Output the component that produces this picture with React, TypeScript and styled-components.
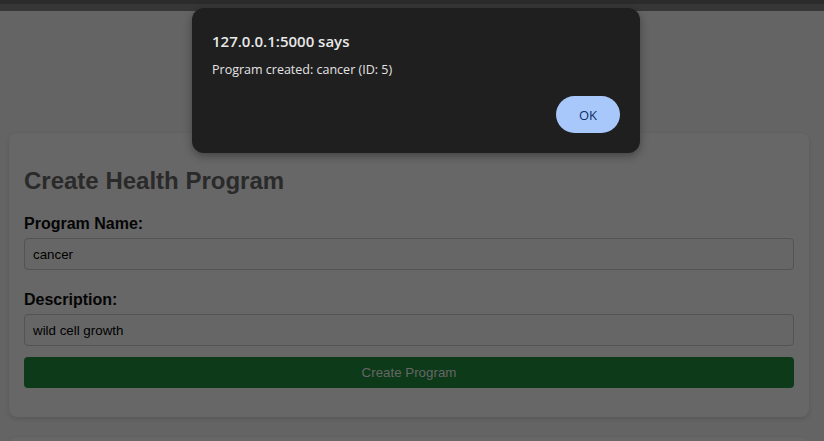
import React from "react";
import styled, { createGlobalStyle } from "styled-components";

const GlobalStyle = createGlobalStyle`
  html, body {
    margin: 0;
    padding: 0;
    background: #646464;
    overflow: hidden;
    font-family: "Liberation Sans", Arial, sans-serif;
  }
`;

const Page = styled.div`
  position: relative;
  width: 824px;
  height: 441px;
  overflow: hidden;
  background: #646464;
`;

const ChromeTop = styled.div`
  height: 4px;
  background: #2b2b2b;
`;

const ChromeBottom = styled.div`
  height: 7px;
  background: #363636;
`;

const Main = styled.main`
  display: flex;
  flex-direction: column;
  gap: 20px;
  padding: 122px 15px 0 9px;
`;

const Card = styled.section`
  width: 800px;
  box-sizing: border-box;
  background: #676767;
  border-radius: 8px;
  box-shadow: 0 2px 4px rgba(0, 0, 0, 0.12);
  padding: 15px 15px 29px;
  min-height: 40px;
`;

const Title = styled.h2`
  margin: 19px 0 20px;
  font-size: 24px;
  font-weight: bold;
  color: #2a2a2a;
  line-height: normal;
`;

const Field = styled.div<{ $gap: number }>`
  display: flex;
  flex-direction: column;
  margin-bottom: ${(p) => p.$gap}px;
`;

const Label = styled.label`
  display: block;
  font-size: 16px;
  font-weight: bold;
  color: #050505;
  margin-bottom: 5px;
  line-height: normal;
`;

const Input = styled.input`
  box-sizing: border-box;
  width: 100%;
  height: 32px;
  padding: 0 8px;
  border: 1px solid #535353;
  border-radius: 4px;
  background: #666666;
  color: #000;
  font-family: "Liberation Sans", Arial, sans-serif;
  font-size: 13.33px;
  outline: none;
`;

const SubmitButton = styled.button`
  width: 100%;
  height: 31px;
  border: none;
  border-radius: 4px;
  background: #0d3a19;
  color: #666666;
  font-family: "Liberation Sans", Arial, sans-serif;
  font-size: 13.33px;
  cursor: pointer;
`;

const Dialog = styled.div`
  position: absolute;
  top: 8px;
  left: 192px;
  width: 448px;
  box-sizing: border-box;
  padding: 23px 20px 20px;
  background: #1f1f1f;
  border-radius: 12px;
  box-shadow: 0 3px 8px rgba(0, 0, 0, 0.35);
  display: flex;
  flex-direction: column;
  font-family: "Open Sans", "Noto Sans", sans-serif;
`;

const DialogTitle = styled.div`
  font-size: 15px;
  line-height: 20px;
  font-weight: 600;
  color: #e8e8e8;
`;

const DialogMessage = styled.div`
  margin-top: 10px;
  font-size: 12.5px;
  line-height: 18px;
  color: #e3e3e3;
`;

const DialogActions = styled.div`
  display: flex;
  justify-content: flex-end;
  margin-top: 17px;
`;

const OkButton = styled.button`
  width: 64px;
  height: 37px;
  border: none;
  border-radius: 19px;
  background: #a8c7fa;
  color: #0b2f66;
  font-family: "Open Sans", "Noto Sans", sans-serif;
  font-size: 13px;
  font-weight: 500;
  cursor: pointer;
`;

export default function App() {
  return (
    <>
      <GlobalStyle />
      <Page>
        <ChromeTop />
        <ChromeBottom />
        <Main>
          <Card>
            <Title>Create Health Program</Title>
            <Field $gap={21}>
              <Label>Program Name:</Label>
              <Input defaultValue="cancer" />
            </Field>
            <Field $gap={11}>
              <Label>Description:</Label>
              <Input defaultValue="wild cell growth" />
            </Field>
            <SubmitButton>Create Program</SubmitButton>
          </Card>
          <Card />
        </Main>
        <Dialog>
          <DialogTitle>127.0.0.1:5000 says</DialogTitle>
          <DialogMessage>Program created: cancer (ID: 5)</DialogMessage>
          <DialogActions>
            <OkButton>OK</OkButton>
          </DialogActions>
        </Dialog>
      </Page>
    </>
  );
}
